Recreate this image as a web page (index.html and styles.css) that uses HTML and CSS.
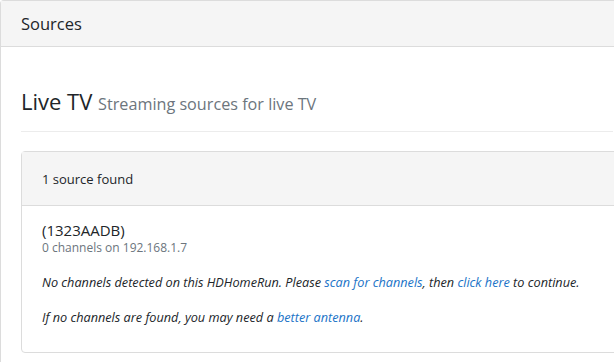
FILE: index.html
```html
<!DOCTYPE html>
<html lang="en">
  <head>
    <meta charset="UTF-8" />
    <meta name="viewport" content="width=device-width, initial-scale=1.0" />
    <title>Sources</title>
    <link rel="stylesheet" href="styles.css">
  </head>
  <body>
    <div class="page">
      <div class="card outer">
        <div class="card-header outer-header">Sources</div>
        <div class="card-body outer-body">
          <h3 class="page-title">Live TV <small>Streaming sources for live TV</small></h3>
          <hr />
          <div class="card inner">
            <div class="card-header inner-header">1 source found</div>
            <div class="card-body inner-body">
              <div class="device-name">(1323AADB)</div>
              <div class="device-info">0 channels on 192.168.1.7</div>
              <p class="note">
                No channels detected on this HDHomeRun. Please
                <a href="#">scan for channels</a>, then
                <a href="#">click here</a> to continue.
              </p>
              <p class="note">
                If no channels are found, you may need a
                <a href="#">better antenna</a>.
              </p>
            </div>
          </div>
        </div>
      </div>
    </div>
  </body>
</html>
```

FILE: styles.css
```css
body {
  margin: 0;
  font-family: "Open Sans", "Noto Sans", sans-serif;
  color: #212529;
  background: #fff;
}

.page {
  height: 362px;
  overflow: hidden;
}

.card {
  border: 1px solid #dcdcdc;
  border-radius: 4px;
  background: #fff;
}

.outer {
  margin-right: -20px;
  border-bottom: none;
}

.card-header {
  background: #f5f5f5;
  border-bottom: 1px solid #dcdcdc;
}

.outer-header {
  padding: 11px 20px 0;
  height: 34px;
  font-size: 16.5px;
}

.outer-body {
  padding: 20px 20px 30px;
}

.page-title {
  margin: 19px 0 0;
  font-size: 22px;
  font-weight: 400;
  line-height: 30px;
}

.page-title small {
  font-size: 16.2px;
  color: #6c757d;
}

hr {
  margin: 12px 0 19px;
  border: none;
  border-top: 1px solid #ececec;
}

.inner {
  margin-right: -20px;
}

.inner-header {
  padding: 18px 20px 0;
  height: 35px;
  font-size: 13px;
}

.inner-body {
  padding: 14px 20px 26px;
}

.device-name {
  font-size: 15px;
  line-height: 20px;
}

.device-info {
  font-size: 12px;
  color: #6c757d;
  line-height: 16px;
}

.note {
  font-size: 12.7px;
  font-style: italic;
  margin: 18px 0 0;
  line-height: 17px;
}

a {
  color: #1a73c7;
  text-decoration: none;
}
```
